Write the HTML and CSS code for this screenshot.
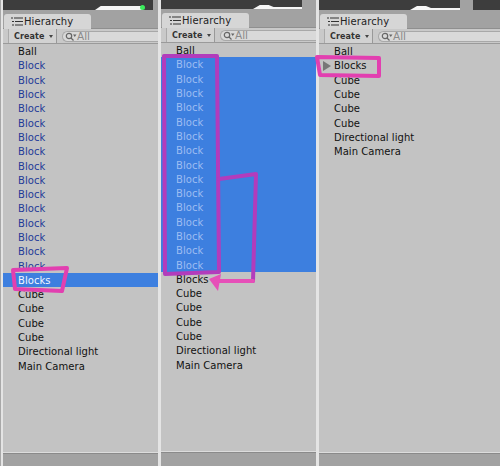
FILE: index.html
```html
<!DOCTYPE html>
<html lang="en">
<head>
<meta charset="utf-8">
<title>Hierarchy</title>
<link rel="stylesheet" href="styles.css">
</head>
<body>
<div class="screen">
  <section class="panel panel-a">
    <div class="scene"><div class="scene-view"><i class="snow snow-a"></i><i class="gizmo"></i></div></div>
    <div class="tabs"><div class="tab"><svg class="tab-icon" width="12" height="9" viewBox="0 0 12 9"><path d="M0 1h2M3 1h9M1 4.500h2M4 4.500h8M1 8h2M4 8h8" stroke="#333" fill="none"/></svg><span>Hierarchy</span></div></div>
    <div class="toolbar"><div class="create">Create<i class="caret"></i></div><div class="search"><svg width="14" height="11" viewBox="0 0 14 11"><circle cx="6" cy="5" r="2.700" fill="none" stroke="#666" stroke-width="1.200"/><path d="M8 7l2.500 2.500" stroke="#666" stroke-width="1.200"/><path d="M10 3.500h3.500l-1.750 2.500z" fill="#666"/></svg><span>All</span></div></div>
    <ul class="list">
      <li class="row">Ball</li>
      <li class="row prefab">Block</li><li class="row prefab">Block</li><li class="row prefab">Block</li><li class="row prefab">Block</li><li class="row prefab">Block</li>
      <li class="row prefab">Block</li><li class="row prefab">Block</li><li class="row prefab">Block</li><li class="row prefab">Block</li><li class="row prefab">Block</li>
      <li class="row prefab">Block</li><li class="row prefab">Block</li><li class="row prefab">Block</li><li class="row prefab">Block</li><li class="row prefab">Block</li>
      <li class="row selected">Blocks</li>
      <li class="row">Cube</li><li class="row">Cube</li><li class="row">Cube</li><li class="row">Cube</li>
      <li class="row">Directional light</li><li class="row">Main Camera</li>
    </ul>
    <div class="footer"></div>
  </section>
  <section class="panel panel-b">
    <div class="scene"><div class="scene-view"><i class="snow snow-b"></i></div></div>
    <div class="tabs"><div class="tab"><svg class="tab-icon" width="12" height="9" viewBox="0 0 12 9"><path d="M0 1h2M3 1h9M1 4.500h2M4 4.500h8M1 8h2M4 8h8" stroke="#333" fill="none"/></svg><span>Hierarchy</span></div></div>
    <div class="toolbar"><div class="create">Create<i class="caret"></i></div><div class="search"><svg width="14" height="11" viewBox="0 0 14 11"><circle cx="6" cy="5" r="2.700" fill="none" stroke="#666" stroke-width="1.200"/><path d="M8 7l2.500 2.500" stroke="#666" stroke-width="1.200"/><path d="M10 3.500h3.500l-1.750 2.500z" fill="#666"/></svg><span>All</span></div></div>
    <ul class="list">
      <li class="row">Ball</li>
      <li class="row dim">Block</li><li class="row dim">Block</li><li class="row dim">Block</li><li class="row dim">Block</li><li class="row dim">Block</li>
      <li class="row dim">Block</li><li class="row dim">Block</li><li class="row dim">Block</li><li class="row dim">Block</li><li class="row dim">Block</li>
      <li class="row dim">Block</li><li class="row dim">Block</li><li class="row dim">Block</li><li class="row dim">Block</li><li class="row dim">Block</li>
      <li class="row">Blocks</li>
      <li class="row">Cube</li><li class="row">Cube</li><li class="row">Cube</li><li class="row">Cube</li>
      <li class="row">Directional light</li><li class="row">Main Camera</li>
    </ul>
    <div class="footer"></div>
  </section>
  <section class="panel panel-c">
    <div class="scene"><div class="scene-view"><i class="snow snow-c"></i></div></div>
    <div class="tabs"><div class="tab"><svg class="tab-icon" width="12" height="9" viewBox="0 0 12 9"><path d="M0 1h2M3 1h9M1 4.500h2M4 4.500h8M1 8h2M4 8h8" stroke="#333" fill="none"/></svg><span>Hierarchy</span></div></div>
    <div class="toolbar"><div class="create">Create<i class="caret"></i></div><div class="search"><svg width="14" height="11" viewBox="0 0 14 11"><circle cx="6" cy="5" r="2.700" fill="none" stroke="#666" stroke-width="1.200"/><path d="M8 7l2.500 2.500" stroke="#666" stroke-width="1.200"/><path d="M10 3.500h3.500l-1.750 2.500z" fill="#666"/></svg><span>All</span></div></div>
    <ul class="list">
      <li class="row">Ball</li>
      <li class="row parent"><svg class="fold" width="9" height="10" viewBox="0 0 9 10"><path d="M0 0l8 5-8 5z" fill="#777"/></svg>Blocks</li>
      <li class="row">Cube</li><li class="row">Cube</li><li class="row">Cube</li><li class="row">Cube</li>
      <li class="row">Directional light</li><li class="row">Main Camera</li>
    </ul>
    <div class="footer"></div>
  </section>
  <svg class="marks" width="500" height="466" viewBox="0 0 500 466">
    <g fill="none" stroke-linejoin="round" stroke-linecap="round">
      <path d="M13 270L67 268L62 291L15 289Z" stroke="#e23fb0" stroke-width="4"/>
      <path d="M164 56L217 56L219 272L165 274Z" stroke="#b23cbc" stroke-width="4"/>
      <path d="M219 179L256 174L253 281L216 281" stroke="#b23cbc" stroke-width="4"/>
      <path d="M216 281L253 281" stroke="#e64fb8" stroke-width="4"/>
      <path d="M317 57L379 58L379 76L320 75Z" stroke="#e23fb0" stroke-width="4"/>
    </g>
    <path d="M221 274L209 279L218 291Z" fill="#e64fb8"/>
  </svg>
</div>
</body>
</html>
```
FILE: styles.css
```css
* { box-sizing: border-box; }
html, body { margin: 0; padding: 0; }
body { background: #c4c4c4; font-family: "DejaVu Sans", sans-serif; }
.screen {
  position: relative;
  display: flex;
  width: 500px;
  height: 466px;
  overflow: hidden;
  padding-left: 3px;
  gap: 3px;
  background: linear-gradient(90deg, #a8a8a8 0 1px, #e4e4e4 1px 3px, #e4e4e4);
}
.panel {
  display: flex;
  flex-direction: column;
  height: 466px;
  background: #c3c3c3;
}
.panel-a { width: 155px; }
.panel-b { width: 155px; }
.panel-c { width: 181px; }
.scene { height: 14px; flex: none; background: #a2a2a2; padding-right: 5px; }
.panel-b .scene { height: 13px; padding-right: 14px; }
.panel-c .scene { padding-right: 0; }
.scene-view { position: relative; height: 10px; background: #3d3d3d; overflow: hidden; }
.panel-b .scene-view { height: 9px; }
.panel-c .scene-view { background: linear-gradient(90deg, #3d3d3d 0 141px, #a2a2a2 141px 154px, #3d3d3d 154px); }
.snow { position: absolute; display: block; bottom: 0; height: 4px; background: #f6f6f6; }
.snow-a { left: 92px; width: 48px; clip-path: polygon(12% 0, 100% 0, 100% 100%, 0 100%); }
.snow-b { left: 92px; width: 49px; clip-path: polygon(14% 0, 32% 0, 42% 50%, 100% 50%, 100% 100%, 0 100%); }
.snow-c { left: 91px; width: 50px; clip-path: polygon(14% 0, 32% 0, 42% 50%, 100% 50%, 100% 100%, 0 100%); }
.gizmo { position: absolute; left: 137px; bottom: 0; width: 5px; height: 5px; border-radius: 50%; background: #3bec5c; }
.tabs { height: 15px; flex: none; background: #a2a2a2; padding-left: 1px; border-bottom: 1px solid #8f8f8f; }
.tab {
  display: flex;
  align-items: center;
  gap: 1px;
  width: 87px;
  height: 15px;
  padding-left: 7px;
  background: #d6d6d6;
  border-radius: 3px 3px 0 0;
  font-size: 10px;
  letter-spacing: 0.1px;
  color: #222;
}
.toolbar {
  display: flex;
  align-items: center;
  height: 15px;
  flex: none;
  gap: 5px;
  padding-left: 5px;
  background: #c9c9c9;
  border-bottom: 1px solid #9a9a9a;
  overflow: hidden;
}
.create {
  display: flex;
  align-items: center;
  gap: 4px;
  width: 49px;
  height: 14px;
  padding-left: 5px;
  font-size: 8px;
  font-weight: 700;
  letter-spacing: 0.1px;
  color: #333;
  background: #d2d2d2;
  border-left: 1px solid #aaa;
  border-right: 1px solid #999;
}
.caret { width: 0; height: 0; border: 2.500px solid transparent; border-top: 3px solid #444; border-bottom: 0; }
.search {
  display: flex;
  flex: 1;
  align-items: center;
  height: 11px;
  padding-left: 0;
  font-size: 10.500px;
  color: #8a8a8a;
  background: #d9d9d9;
  border: 1px solid #a8a8a8;
  border-right: 0;
  border-radius: 6px 0 0 6px;
}
.search svg { flex: none; }
.list { flex: 1; margin: 0; padding: 0; list-style: none; }
.row {
  display: flex;
  align-items: center;
  height: 14.300px;
  padding: 1px 0 0 15px;
  font-size: 10px;
  letter-spacing: 0.05px;
  color: #111;
  white-space: nowrap;
}
.prefab { color: #1f3a98; }
.dim { color: #9dbdf2; background: #3d7fdf; }
.selected { color: #f0f6ff; background: #3d7fdf; }
.fold { position: absolute; margin-left: -11px; }
.footer {
  flex: none;
  height: 13px;
  background: #a2a2a2;
  border-top: 1px solid #8a8a8a;
  box-shadow: 0 -1px 0 #dcdcdc;
}
.panel-b .footer { height: 14px; }
.marks { position: absolute; left: 0; top: 0; pointer-events: none; }
```
